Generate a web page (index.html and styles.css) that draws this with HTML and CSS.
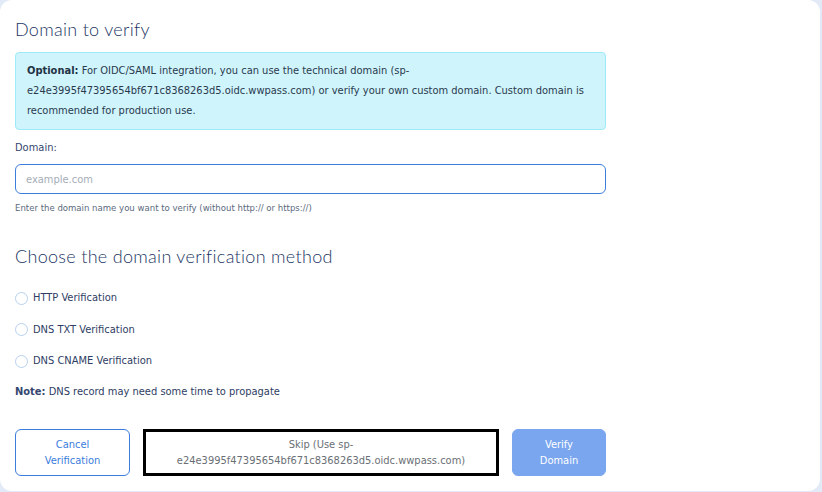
FILE: index.html
```html
<!DOCTYPE html>
<html lang="en">
<head>
<meta charset="utf-8">
<title>Domain to verify</title>
<link rel="stylesheet" href="styles.css">
</head>
<body>
<div class="card">
  <h2 class="title">Domain to verify</h2>
  <div class="alert"><strong>Optional:</strong> For OIDC/SAML integration, you can use the technical domain (sp-e24e3995f47395654bf671c8368263d5.oidc.wwpass.com) or verify your own custom domain. Custom domain is recommended for production use.</div>
  <label class="label" for="domain">Domain:</label>
  <input class="input" id="domain" type="text" placeholder="example.com">
  <div class="help">Enter the domain name you want to verify (without http:// or https://)</div>
  <h2 class="title title-method">Choose the domain verification method</h2>
  <div class="radios">
    <label class="radio"><span class="circle"></span>HTTP Verification</label>
    <label class="radio"><span class="circle"></span>DNS TXT Verification</label>
    <label class="radio"><span class="circle"></span>DNS CNAME Verification</label>
  </div>
  <div class="note"><strong>Note:</strong> DNS record may need some time to propagate</div>
  <div class="actions">
    <button class="btn btn-cancel">Cancel<br>Verification</button>
    <button class="btn btn-skip">Skip (Use sp-<br>e24e3995f47395654bf671c8368263d5.oidc.wwpass.com)</button>
    <button class="btn btn-verify">Verify<br>Domain</button>
  </div>
</div>
</body>
</html>
```

FILE: styles.css
```css
html, body {
  margin: 0;
  padding: 0;
}
body {
  background: #e2eaf8;
  width: 822px;
  height: 492px;
  overflow: hidden;
  font-family: "Liberation Sans Narrow", "DejaVu Sans Condensed", "Liberation Sans", sans-serif;
  color: #2e3d63;
}
.card {
  box-sizing: border-box;
  width: 820px;
  height: 491px;
  background: #ffffff;
  border-radius: 12px;
  padding: 18px 15px 0 15px;
  display: flex;
  flex-direction: column;
}
.title {
  margin: 0;
  font-family: "Lato", "Inter", sans-serif;
  font-weight: 300;
  font-size: 18px;
  line-height: 22px;
  color: #223664;
  letter-spacing: 0.3px;
}
.alert {
  box-sizing: border-box;
  width: 591px;
  margin-top: 12px;
  background: #cff4fc;
  border: 1px solid #9eeaf9;
  border-radius: 4px;
  padding: 8px 11px;
  font-size: 11px;
  line-height: 20px;
  color: #2a3a4e;
}
.alert strong {
  color: #1f3344;
}
.label {
  margin-top: 11px;
  font-size: 11px;
  line-height: 14px;
  color: #34466f;
}
.input {
  box-sizing: border-box;
  width: 591px;
  height: 30px;
  margin: 9px 0 0 0;
  border: 1px solid #3b7ddd;
  border-radius: 6px;
  padding: 0 10px;
  font-family: inherit;
  font-size: 11px;
  outline: none;
}
.input::placeholder {
  color: #a5adb8;
}
.help {
  margin-top: 8px;
  font-size: 9.5px;
  line-height: 12px;
  color: #5b6a7e;
}
.title-method {
  margin-top: 31px;
}
.radios {
  display: flex;
  flex-direction: column;
  gap: 17.5px;
  margin-top: 24px;
}
.radio {
  display: flex;
  align-items: center;
  gap: 5px;
  font-size: 11px;
  line-height: 14px;
  color: #2e3d63;
}
.circle {
  box-sizing: border-box;
  width: 13px;
  height: 13px;
  border: 1px solid #b7d1f0;
  border-radius: 50%;
  background: #fff;
}
.note {
  margin-top: 17px;
  font-size: 11px;
  line-height: 14px;
  color: #2e3d63;
}
.note strong {
  color: #34466f;
}
.actions {
  display: flex;
  gap: 13px;
  margin-top: 30px;
}
.btn {
  box-sizing: border-box;
  height: 47px;
  font-family: inherit;
  font-size: 11px;
  line-height: 16px;
  text-align: center;
  padding: 0 6px;
  cursor: pointer;
}
.btn-cancel {
  width: 115px;
  background: #fff;
  border: 1px solid #3b7ddd;
  border-radius: 6px;
  color: #3b7ddd;
}
.btn-skip {
  width: 356px;
  background: #fff;
  border: 3px solid #000;
  border-radius: 0;
  color: #6b6f75;
}
.btn-verify {
  width: 94px;
  background: #79a6ef;
  border: 1px solid #79a6ef;
  border-radius: 6px;
  color: #fff;
}
```
